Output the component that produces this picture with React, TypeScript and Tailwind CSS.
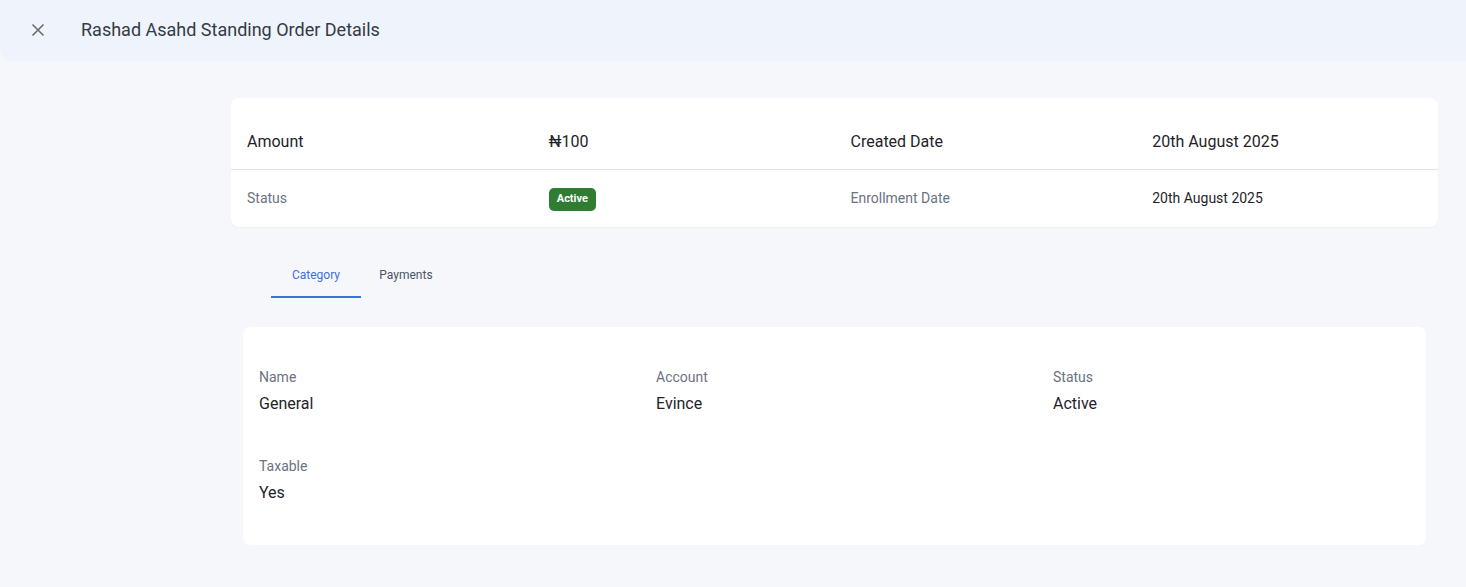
import React, { useState } from "react";

const summary = [
  [
    { label: "Amount", value: "₦100" },
    { label: "Created Date", value: "20th August 2025" },
  ],
  [
    { label: "Status", value: "Active", badge: true },
    { label: "Enrollment Date", value: "20th August 2025" },
  ],
];

const details = [
  { label: "Name", value: "General" },
  { label: "Account", value: "Evince" },
  { label: "Status", value: "Active" },
  { label: "Taxable", value: "Yes" },
];

export default function App() {
  const [tab, setTab] = useState("Category");

  return (
    <div
      className="min-h-[587px] bg-[#f6f7fb] text-[#1f2329]"
      style={{ fontFamily: "Roboto, 'Liberation Sans', sans-serif" }}>
      <header className="flex h-[61px] items-center rounded-bl-xl bg-[#eff3fb]">
        <button className="ml-[28px] -mt-[2px] flex h-5 w-5 items-center justify-center text-[#6b6b6b]">
          <svg width="14" height="14" viewBox="0 0 14 14" fill="none" stroke="currentColor" strokeWidth="1.6">
            <path d="M1.5 1.5l11 11M12.5 1.5l-11 11" />
          </svg>
        </button>
        <h1 className="ml-[33px] -mt-[2px] text-[18px] text-[#333b45]">Rashad Asahd Standing Order Details</h1>
      </header>

      <main className="pl-[231px] pr-[28px] pt-[37px]">
        <div className="rounded-lg bg-white shadow-[0_1px_2px_rgba(0,0,0,0.03)]">
          <div className="grid grid-cols-4 border-b border-[#e3e3e3] pt-[32px] pb-[15px] text-[16px] leading-6">
            {summary[0].map((item) => (
              <React.Fragment key={item.label}>
                <div className="px-4 text-[#1f2329]">{item.label}</div>
                <div className="px-4 text-[#1f2329]">{item.value}</div>
              </React.Fragment>
            ))}
          </div>
          <div className="grid grid-cols-4 items-center pt-[15px] pb-[16px] text-[14px] leading-6">
            {summary[1].map((item) => (
              <React.Fragment key={item.label}>
                <div className="px-4 text-[#6b7280]">{item.label}</div>
                <div className="px-4">
                  {item.badge ? (
                    <span className="inline-flex h-[23px] items-center rounded-[5px] bg-[#2e7d32] px-2 text-[11px] font-bold text-white">
                      {item.value}
                    </span>
                  ) : (
                    <span className="text-[#1f2329]">{item.value}</span>
                  )}
                </div>
              </React.Fragment>
            ))}
          </div>
        </div>

        <div className="mt-[24px] pl-[40px]">
          <div className="flex">
            {["Category", "Payments"].map((t) => (
              <button
                key={t}
                onClick={() => setTab(t)}
                className={
                  "h-[47px] w-[90px] border-b-2 pt-[3px] text-[12px] " +
                  (tab === t ? "border-[#3b72d9] text-[#3f6fd6]" : "border-transparent text-[#4b5563]")
                }>
                {t}
              </button>
            ))}
          </div>
        </div>

        <div className="ml-[12px] mr-[12px] mt-[29px] rounded-lg bg-white px-4 pt-[40px] pb-[40px]">
          <div className="grid grid-cols-3 gap-x-10 gap-y-[40px]">
            {details.map((d) => (
              <div key={d.label} className="flex flex-col gap-[5px]">
                <div className="text-[14px] leading-5 text-[#6b7280]">{d.label}</div>
                <div className="text-[16px] leading-6 text-[#1f2329]">{d.value}</div>
              </div>
            ))}
          </div>
        </div>
      </main>
    </div>
  );
}
